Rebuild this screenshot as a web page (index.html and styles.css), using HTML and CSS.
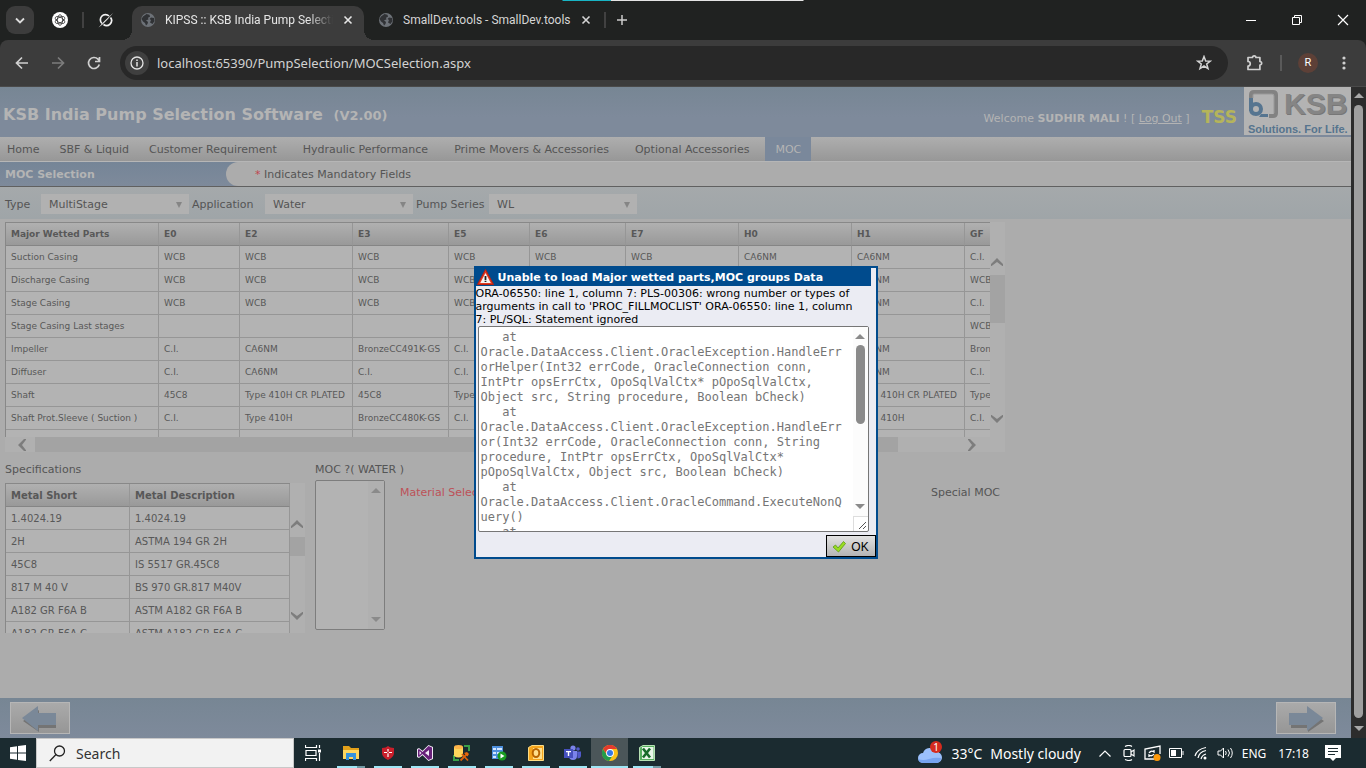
FILE: index.html
```html
<!DOCTYPE html>
<html lang="en">
<head>
<meta charset="utf-8">
<title>KIPSS :: KSB India Pump Selection</title>
<link rel="stylesheet" href="styles.css">
</head>
<body>
<svg class="defs" aria-hidden="true">
  <symbol id="globe" viewBox="0 0 16 16"><circle cx="8" cy="8" r="7" fill="#6d7278"/><path d="M3 4.500 6.500 2l3 .8.5 2-2 1 .5 1.700-2.500.8 2 1.700-.5 2-1.500 1.500-1-2.500L3 9.500 1.500 7zM11 5.500l3 .5.5 3-2 3-2.500-1.500 1-2.500-1.500-1z" fill="#303235"/></symbol>
  <symbol id="close" viewBox="0 0 10 10"><path d="m1.500 1.500 7 7m0-7-7 7" stroke="currentColor" stroke-width="1.600" fill="none"/></symbol>
  <symbol id="chev-up" viewBox="0 0 12 8"><path d="M0 6 6 0l6 6v2.500L6 4 0 8.500z" fill="#7d7d7d"/></symbol>
</svg>

<header class="tabstrip">
  <div class="progress" aria-hidden="true"></div>
  <button class="tab-search" aria-label="Search tabs"><svg width="10" height="7" viewBox="0 0 10 7"><path d="m1 1.500 4 4 4-4" stroke="#dcdcdc" stroke-width="1.800" fill="none"/></svg></button>
  <button class="pinned" aria-label="ChatGPT"><svg width="16" height="16" viewBox="0 0 16 16"><circle cx="8" cy="8" r="8" fill="#fff"/><g fill="none" stroke="#333" stroke-width=".8"><ellipse cx="8" cy="8" rx="2.600" ry="5.300"/><ellipse cx="8" cy="8" rx="2.600" ry="5.300" transform="rotate(60 8 8)"/><ellipse cx="8" cy="8" rx="2.600" ry="5.300" transform="rotate(120 8 8)"/></g></svg></button>
  <span class="sep"></span>
  <button class="pinned pinned-last" aria-label="Grok"><svg width="16" height="16" viewBox="0 0 16 16"><path d="M12.500 5.500A5 5 0 0 1 5.500 12.500M4 11.500A5 5 0 0 1 11 4" fill="none" stroke="#f2f2f2" stroke-width="1.700"/><path d="M.5 15.500 6 9.500 15.500.5 9.500 7.500l-5 5z" fill="#f2f2f2"/></svg></button>
  <div class="tab active"><svg width="16" height="16"><use href="#globe"/></svg><span class="tab-title fade">KIPSS :: KSB India Pump Selectio</span><button aria-label="Close tab"><svg width="10" height="10"><use href="#close"/></svg></button></div>
  <div class="tab"><svg width="16" height="16"><use href="#globe"/></svg><span class="tab-title">SmallDev.tools - SmallDev.tools</span><button aria-label="Close tab"><svg width="10" height="10"><use href="#close"/></svg></button></div>
  <span class="sep"></span>
  <button class="newtab" aria-label="New tab"><svg width="12" height="12" viewBox="0 0 12 12"><path d="M6 1v10M1 6h10" stroke="#ccc" stroke-width="1.500"/></svg></button>
  <div class="winctl">
    <button aria-label="Minimize"><svg width="12" height="12"><path d="M1 6.500h10" stroke="#fff"/></svg></button>
    <button aria-label="Restore"><svg width="12" height="12" fill="none" stroke="#fff"><path d="M1.500 3.500h7v7h-7zM3.500 3V1.500h7v7H9"/></svg></button>
    <button aria-label="Close"><svg width="12" height="12"><path d="m1 1 10 10m0-10L1 11" stroke="#fff" stroke-width="1.200"/></svg></button>
  </div>
</header>

<div class="toolbar">
  <button class="tool" aria-label="Back"><svg width="14" height="14" viewBox="0 0 14 14" fill="none" stroke="#d0d0d0" stroke-width="1.700"><path d="M13 7H2m5-5.500L1.500 7 7 12.500"/></svg></button>
  <button class="tool" aria-label="Forward"><svg width="14" height="14" viewBox="0 0 14 14" fill="none" stroke="#7c7c7c" stroke-width="1.700"><path d="M1 7h11M7 1.500 12.500 7 7 12.500"/></svg></button>
  <button class="tool" aria-label="Reload"><svg width="14" height="14" viewBox="0 0 14 14" fill="none" stroke="#d0d0d0" stroke-width="1.700"><path d="M12.300 8.500A5.500 5.500 0 1 1 11 3.200L12.500 5M12.500 1v4.500H8"/></svg></button>
  <div class="omnibox">
    <button class="info" aria-label="Site information"><svg width="14" height="14" viewBox="0 0 14 14"><circle cx="7" cy="7" r="6" fill="none" stroke="#e4e4e4" stroke-width="1.300"/><path d="M7 6v4.500M7 3.500V5" stroke="#e4e4e4" stroke-width="1.500"/></svg></button>
    <input type="text" aria-label="Address" value="localhost:65390/PumpSelection/MOCSelection.aspx">
    <button class="tool" aria-label="Bookmark"><svg width="16" height="16" viewBox="0 0 16 16"><path d="m8 1.500 1.700 4.400 4.700.2-3.700 2.900 1.300 4.600L8 11l-4 2.600L5.300 9 1.600 6.100l4.700-.2z" fill="none" stroke="#d4d4d4" stroke-width="1.500"/></svg></button>
  </div>
  <button class="tool" aria-label="Extensions"><svg width="18" height="18" viewBox="0 0 18 18"><path d="M2 3.500h4.500a1.700 1.700 0 0 1 3.400 0h4V7.500a1.700 1.700 0 0 1 0 3.500v4.500H2V12a2 2 0 0 0 0-4.500z" fill="none" stroke="#d0d0d0" stroke-width="1.700" stroke-linejoin="round"/></svg></button>
  <span class="sep tall"></span>
  <button class="tool" aria-label="Profile"><span class="avatar">R</span></button>
  <button class="tool" aria-label="Menu"><svg width="4" height="16" fill="#d0d0d0"><circle cx="2" cy="3" r="1.600"/><circle cx="2" cy="8" r="1.600"/><circle cx="2" cy="13" r="1.600"/></svg></button>
</div>

<div class="viewport">
  <main class="page">
    <div class="banner">
      <h1>KSB India Pump Selection Software <small>(V2.00)</small></h1>
      <p class="welcome">Welcome <b>SUDHIR MALI</b> ! [ <a href="#">Log Out</a> ]</p>
      <b class="tss">TSS</b>
      <div class="logo">
        <div class="logo-top">
          <svg width="32" height="30" viewBox="0 0 32 30"><path d="M3 12V6q0-3 3-3h19q3 0 3 3v18q0 3-3 3h-4" fill="none" stroke="#828282" stroke-width="4"/><path d="M5 9V6q0-1 1-1h18q2 0 2 2v17" fill="none" stroke="#999" stroke-width="1"/><path d="M3 9v13M3 20a5 5 0 1 1 5 5q-5 0-5-5" fill="none" stroke="#567590" stroke-width="4"/><path d="M13 25h7v3h-9z" fill="#567590"/></svg>
          <span>KSB</span>
        </div>
        <div class="slogan">Solutions. For Life.</div>
      </div>
    </div>

    <nav class="menu">
      <a href="#">Home</a><a href="#">SBF &amp; Liquid</a><a href="#">Customer Requirement</a><a href="#" class="apart">Hydraulic Performance</a><a href="#" class="apart">Prime Movers &amp; Accessories</a><a href="#" class="apart">Optional Accessories</a><a href="#" class="apart current">MOC</a>
    </nav>

    <div class="titlebar">
      <h2>MOC Selection</h2>
      <p><span class="req">*</span> Indicates Mandatory Fields</p>
    </div>

    <form class="filters">
      <label for="type">Type</label><span class="pick"><select id="type"><option>MultiStage</option></select></span>
      <label for="app">Application</label><span class="pick"><select id="app"><option>Water</option></select></span>
      <label for="series">Pump Series</label><span class="pick"><select id="series"><option>WL</option></select></span>
    </form>

    <section class="parts">
      <div class="parts-main">
        <div class="clip parts-clip">
          <table class="grid parts-table">
            <colgroup><col class="w-name"><col class="w-s"><col class="w-l"><col class="w-m"><col class="w-s"><col class="w-m"><col class="w-l"><col class="w-l"><col class="w-l"><col class="w-m"></colgroup>
            <thead><tr><th>Major Wetted Parts</th><th>E0</th><th>E2</th><th>E3</th><th>E5</th><th>E6</th><th>E7</th><th>H0</th><th>H1</th><th>GF</th></tr></thead>
            <tbody>
              <tr><td>Suction Casing</td><td>WCB</td><td>WCB</td><td>WCB</td><td>WCB</td><td>WCB</td><td>WCB</td><td>CA6NM</td><td>CA6NM</td><td>C.I.</td></tr>
              <tr><td>Discharge Casing</td><td>WCB</td><td>WCB</td><td>WCB</td><td>WCB</td><td>WCB</td><td>WCB</td><td>CA6NM</td><td>CA6NM</td><td>WCB</td></tr>
              <tr><td>Stage Casing</td><td>WCB</td><td>WCB</td><td>WCB</td><td>WCB</td><td>WCB</td><td>WCB</td><td>CA6NM</td><td>CA6NM</td><td>C.I.</td></tr>
              <tr><td>Stage Casing Last stages</td><td></td><td></td><td></td><td></td><td></td><td></td><td></td><td></td><td>WCB</td></tr>
              <tr><td>Impeller</td><td>C.I.</td><td>CA6NM</td><td>BronzeCC491K-GS</td><td>C.I.</td><td>CA6NM</td><td>C.I.</td><td>CA6NM</td><td>CA6NM</td><td>BronzeCC491K-GS</td></tr>
              <tr><td>Diffuser</td><td>C.I.</td><td>CA6NM</td><td>C.I.</td><td>C.I.</td><td>CA6NM</td><td>C.I.</td><td>CA6NM</td><td>CA6NM</td><td>C.I.</td></tr>
              <tr><td>Shaft</td><td>45C8</td><td>Type 410H CR PLATED</td><td>45C8</td><td>Type 410H</td><td>45C8</td><td>45C8</td><td>Type 410H</td><td>Type 410H CR PLATED</td><td>Type 410H</td></tr>
              <tr><td>Shaft Prot.Sleeve ( Suction )</td><td>C.I.</td><td>Type 410H</td><td>BronzeCC480K-GS</td><td>C.I.</td><td>C.I.</td><td>C.I.</td><td>Type 410H</td><td>Type 410H</td><td>C.I.</td></tr>
              <tr><td></td><td></td><td></td><td></td><td></td><td></td><td></td><td></td><td></td><td></td></tr>
            </tbody>
          </table>
        </div>
        <div class="hbar"><svg class="left" width="12" height="8"><use href="#chev-up"/></svg><i></i><svg class="right" width="12" height="8"><use href="#chev-up"/></svg></div>
      </div>
      <div class="vbar"><svg width="12" height="8"><use href="#chev-up"/></svg><i></i><svg class="down" width="12" height="8"><use href="#chev-up"/></svg></div>
    </section>

    <section class="lower">
      <div class="specs">
        <h3>Specifications</h3>
        <div class="spec-box">
          <div class="clip spec-clip">
            <table class="grid spec-table">
              <colgroup><col class="w-short"><col></colgroup>
              <thead><tr><th>Metal Short</th><th>Metal Description</th></tr></thead>
              <tbody>
                <tr><td>1.4024.19</td><td>1.4024.19</td></tr>
                <tr><td>2H</td><td>ASTMA 194 GR 2H</td></tr>
                <tr><td>45C8</td><td>IS 5517 GR.45C8</td></tr>
                <tr><td>817 M 40 V</td><td>BS 970 GR.817 M40V</td></tr>
                <tr><td>A182 GR F6A B</td><td>ASTM A182 GR F6A B</td></tr>
                <tr><td>A182 GR F6A C</td><td>ASTM A182 GR F6A C</td></tr>
              </tbody>
            </table>
          </div>
          <div class="vbar vbar-spec"><svg width="12" height="8"><use href="#chev-up"/></svg><i></i><svg class="down" width="12" height="8"><use href="#chev-up"/></svg></div>
        </div>
      </div>
      <div class="moc">
        <label for="moc">MOC ?( WATER )</label>
        <div class="listbox"><select id="moc" size="6"></select><div class="steps"><span class="tri-up"></span><span class="tri-down"></span></div></div>
      </div>
      <div class="notes"><span class="material">Material Selection</span><span>Special MOC</span></div>
    </section>

    <footer class="pager">
      <button aria-label="Previous"><svg width="38" height="28" viewBox="0 0 38 28"><path d="M2 17 18 6v5h17v13H18v4z" fill="#747474"/><path d="M1 14 17 2v7h18v12H17v6z" fill="#7a8898"/></svg></button>
      <button aria-label="Next"><svg width="38" height="28" viewBox="0 0 38 28"><path d="M37 17 21 6v5H4v13h17v4z" fill="#747474"/><path d="M36 14 20 2v7H2v12h18v6z" fill="#7a8898"/></svg></button>
    </footer>
  </main>
  <div class="page-scroll" aria-hidden="true"><span class="tri-up"></span><i></i><span class="tri-down"></span></div>

  <div class="overlay">
    <div class="dialog" role="dialog" aria-labelledby="dlg-title">
      <h2 id="dlg-title"><svg width="17" height="16" viewBox="0 0 17 16"><path d="M8.500.5 16.500 15.500H.5z" fill="#e23a22" stroke="#b62010"/><path d="M8.500 4 13.800 14h-10.600z" fill="#f5f5f5"/><path d="M8.500 7v4M8.500 11.700v1.300" stroke="#222" stroke-width="1.800"/></svg>Unable to load Major wetted parts,MOC groups Data</h2>
      <p>ORA-06550: line 1, column 7: PLS-00306: wrong number or types of arguments in call to 'PROC_FILLMOCLIST' ORA-06550: line 1, column 7: PL/SQL: Statement ignored</p>
      <div class="trace">
        <textarea aria-label="Stack trace" readonly>   at Oracle.DataAccess.Client.OracleException.HandleErrorHelper(Int32 errCode, OracleConnection conn, IntPtr opsErrCtx, OpoSqlValCtx* pOpoSqlValCtx, Object src, String procedure, Boolean bCheck)
   at Oracle.DataAccess.Client.OracleException.HandleError(Int32 errCode, OracleConnection conn, String procedure, IntPtr opsErrCtx, OpoSqlValCtx* pOpoSqlValCtx, Object src, Boolean bCheck)
   at Oracle.DataAccess.Client.OracleCommand.ExecuteNonQuery()
   at</textarea>
        <div class="trace-side" aria-hidden="true"><div class="trace-bar"><span class="tri-up"></span><i></i><span class="tri-down"></span></div><svg width="15" height="15"><path d="M0 .5h15M.5 0v15" stroke="#ddd"/><path d="m6 13 7-7m-3 7 3-3" stroke="#555"/></svg></div>
      </div>
      <div class="dialog-foot"><button><svg width="14" height="12" viewBox="0 0 14 12"><path d="m1 6 2.500-2L6 7 11.500.5 13.500 2.500 6.500 11z" fill="#9add22" stroke="#5a9a12" stroke-width=".8"/></svg>OK</button></div>
    </div>
  </div>
</div>

<footer class="taskbar">
  <button class="start" aria-label="Start"><svg width="16" height="16" fill="#fff"><path d="M0 2.200 7 1.200V7.500H0zM8 1 16 0v7.500H8zM0 8.500h7v6.300l-7-1zM8 8.500h8V16l-8-1.100z"/></svg></button>
  <label class="search"><svg width="17" height="17" viewBox="0 0 17 17" fill="none" stroke="#222" stroke-width="1.300"><circle cx="10.500" cy="6" r="5"/><path d="M7 9.500.8 16"/></svg><input type="text" placeholder="Search" aria-label="Search"></label>
  <div class="apps">
    <button class="plain" aria-label="Task view"><svg width="17" height="16" fill="none" stroke="#fff"><path d="M.5 0v2.500h11V0M.5 16v-2.500h11V16M1 5.500h10v5H1zM14.500 0v3m0 5v8" stroke-width="1.200"/><path d="M13 4.500h3v3h-3z" fill="#fff" stroke="none"/></svg></button>
    <button class="many" aria-label="File Explorer"><svg width="16" height="16"><path d="M0 1h6l2 2h8v11H0z" fill="#e3a11a"/><path d="M0 5h16v9H0z" fill="#ffd75e"/><path d="M3 15V8h10v7h-3v-3H6v3z" fill="#3593dd"/></svg></button>
    <button aria-label="Security"><svg width="12" height="14"><path d="M0 2q4 0 6-2 2 2 6 2v5q0 4-6 7-6-3-6-7z" fill="#c91f2b"/><path d="M6 3v8M2 6.500h8" stroke="#fff" stroke-width="1.200"/><circle cx="6" cy="6.500" r="1" fill="#c91f2b"/></svg></button>
    <button aria-label="Visual Studio"><svg width="16" height="16"><path d="M11.500 0 16 2v12l-4.500 2L5.500 10.300 2 13l-2-1V4l2-1 3.500 2.700z" fill="#f2eaf7"/><path d="m11.500 1 3.500 1.500v11L11.500 15 5.500 9 2 12l-1-.7V4.700L2 4l3.500 3zM12 5 8 8l4 3zM2.500 6v4l2-2z" fill="#68217a" fill-rule="evenodd"/></svg></button>
    <button aria-label="Database Tools"><svg width="17" height="17"><path d="M11 1h5v5M1 10v5h5" fill="none" stroke="#39a048" stroke-width="2"/><path d="M1 2v9q4.500 3 9 0V2z" fill="#ffd65c"/><ellipse cx="5.500" cy="2" rx="4.500" ry="2" fill="#ffb54a"/><path d="m7.500 15.500 6-6M9 9l6 6.500" stroke="#d9610c" stroke-width="1.800"/><path d="m11 8 3-1 2 2-1.500 2.500z" fill="#e8690b"/></svg></button>
    <button aria-label="Toad"><svg width="16" height="16"><path d="M1 1h11v13H1z" fill="#4d8fdd"/><path d="M2 3h3v2H2zM6 3h5v2H6zM2 7h3v2H2zM6 7h5v2H6zM2 11h3v2H2z" fill="#d4e7ff"/><circle cx="11" cy="11" r="4.500" fill="#189c20"/><path d="m9.500 8.500 4 2.500-4 2.500z" fill="#fff"/></svg></button>
    <button aria-label="Outlook"><svg width="16" height="16"><path d="M.5 2.500 4 .5h11.500v15H.5z" fill="#f6a51c" stroke="#fbdc86"/><path d="M5 3h9v11H5z" fill="#ffdf8c"/><ellipse cx="8" cy="8" rx="3.300" ry="4" fill="none" stroke="#b86400" stroke-width="2"/></svg></button>
    <button aria-label="Teams"><svg width="17" height="16"><circle cx="9" cy="3" r="2.600" fill="#7b83eb"/><circle cx="14" cy="4" r="1.800" fill="#5059c9"/><path d="M5 6h8v5a4 4 0 0 1-8 0z" fill="#7b83eb"/><path d="M13 6.500h4v4q0 3-3.500 3z" fill="#5059c9"/><path d="M0 4h9v9H0z" fill="#4650bd"/><path d="M2 6h5v1.300H5.200V11H3.800V7.300H2z" fill="#fff"/></svg></button>
    <button class="on" aria-label="Chrome"><svg width="16" height="16"><circle cx="8" cy="8" r="8" fill="#fbc116"/><path d="M1 4a8 8 0 0 1 14 0H8L5 9.500z" fill="#e33b2e"/><path d="M1 4a8 8 0 0 0 6 12l4-6H5z" fill="#229b4b"/><circle cx="8" cy="8" r="3.900" fill="#fff"/><circle cx="8" cy="8" r="3" fill="#3478e5"/></svg></button>
    <button class="many" aria-label="Excel"><svg width="16" height="16"><path d="M.5 2.500 4 .5h11.500v15H.5z" fill="#58b060" stroke="#b7e1b4"/><path d="M3 2h11.500v12H3z" fill="#e9f6e8"/><path d="m4 3.500 7 9m0-9-7 9" stroke="#176b2a" stroke-width="2.600"/></svg></button>
  </div>
  <div class="tray">
    <button class="weather"><svg width="26" height="24" viewBox="0 0 26 24"><circle cx="17" cy="11" r="5" fill="#e89b25"/><path d="M6 22a5 5 0 0 1 0-10 7 7 0 0 1 13-1 5.500 5.500 0 0 1 1 11z" fill="#9bc0fb"/><path d="M1 18q5 2 11 0t12-1a5 5 0 0 1-4 5H6q-4 0-5-4z" fill="#76a3f0"/><circle cx="19" cy="6" r="6" fill="#d52b1e"/><text x="19" y="10" text-anchor="middle" class="badge">1</text></svg><span>33°C</span><span>Mostly cloudy</span></button>
    <button aria-label="Show hidden icons"><svg width="12" height="7"><path d="m.5 6.500 5.500-5.500 5.500 5.500" fill="none" stroke="#fff" stroke-width="1.200"/></svg></button>
    <button aria-label="Meet Now"><svg width="12" height="16" fill="none" stroke="#fff" stroke-width="1.200"><rect x="1" y="4.500" width="7" height="7" rx="1"/><path d="m8 7 3-2v6L8 9M2 1.500q4-2 7 0M2 14.500q4 2 7 0"/></svg></button>
    <button aria-label="Update"><svg width="17" height="16" fill="none" stroke="#fff" stroke-width="1.300"><path d="M10 14H1V4l15-3v8M5 8q2-3 5-1V5M10 9q-2 3-5 1v2"/><circle cx="13" cy="12.500" r="3.500" fill="#ff9a0a" stroke="none"/></svg></button>
    <button aria-label="Battery"><svg width="15" height="10"><path d="M.5.500h12v9H.5zM14 3v4" fill="none" stroke="#fff"/><path d="M2 2h5v6H2z" fill="#fff"/></svg></button>
    <button aria-label="Network"><svg width="14" height="14" fill="none" stroke="#fff" stroke-width="1.200"><path d="M1 10Q3 3 12 1.500M4 12q1-6 8-7.500M7 13q1-4 5-5"/><circle cx="11" cy="12" r="1.500" fill="#fff" stroke="none"/></svg></button>
    <button aria-label="Volume"><svg width="16" height="12" fill="none" stroke="#fff"><path d="M1 4h2.500L6.500 1v10L3.500 8H1zM8.500 4q1.500 2 0 4M11 2.500q3 3.500 0 7M13.500 1q3.500 5 0 10"/></svg></button>
    <span class="lang">ENG</span><time>17:18</time>
    <button aria-label="Notifications"><svg width="16" height="16"><path d="M0 0h16v13h-5l-3 3-3-3H0z" fill="#fff"/><path d="M3 3.500h10M3 6.500h10M3 9.500h7" stroke="#1b2b30" stroke-width="1.200"/></svg></button>
  </div>
</footer>
</body>
</html>
```
FILE: styles.css
```css
* { box-sizing: border-box; }
body {
  margin: 0;
  height: 100vh;
  display: flex;
  flex-direction: column;
  overflow: hidden;
  background: #202221;
  font-family: "DejaVu Sans", Verdana, sans-serif;
  font-size: 11px;
  color: #555;
}
button, input, select, textarea { font: inherit; color: inherit; border: 0; background: none; padding: 0; margin: 0; }
button { display: flex; align-items: center; justify-content: center; }
h1, h2, h3, p { margin: 0; font-weight: normal; }
svg { display: block; flex: none; }
.defs { position: absolute; width: 0; height: 0; }

/* Browser chrome */
.tabstrip { position: relative; flex: none; height: 40px; display: flex; align-items: center; padding-left: 6px; background: #202221; font-family: Roboto, "Noto Sans", sans-serif; font-size: 12px; color: #d5d5d5; }
.progress { position: absolute; top: 0; left: 50%; width: 241px; height: 1px; transform: translateX(-50%); background: linear-gradient(90deg, #18b4c4 20%, #e4e4e4 20%); }
.tab-search { width: 28px; height: 28px; border-radius: 9px; background: #3c3c3c; margin-right: 9px; }
.pinned { width: 34px; height: 34px; }
.pinned-last { margin-right: 9px; }
.sep { width: 2px; height: 16px; margin: 0 5px; background: #414141; }
.tab { width: 232px; height: 34px; margin-top: 6px; padding: 0 8px 6px; display: flex; align-items: center; }
.tab + .tab { margin-left: 6px; }
.tab + .tab + .sep { margin: 0 4px 0 2px; }
.tab.active { position: relative; background: #3c3c3c; border-radius: 10px 10px 0 0; color: #e6e6e6; }
.tab.active::before, .tab.active::after { content: ""; position: absolute; bottom: 0; width: 10px; height: 10px; }
.tab.active::before { left: -10px; background: radial-gradient(circle at 0 0, transparent 10px, #3c3c3c 10px); }
.tab.active::after { right: -10px; background: radial-gradient(circle at 100% 0, transparent 10px, #3c3c3c 10px); }
.tab-title { flex: 1; min-width: 0; margin-left: 9px; overflow: hidden; white-space: nowrap; }
.fade { -webkit-mask-image: linear-gradient(90deg, #000 85%, transparent); mask-image: linear-gradient(90deg, #000 85%, transparent); }
.tab button { width: 16px; margin-left: 7px; }
.newtab { width: 24px; height: 28px; }
.winctl { margin-left: auto; display: flex; }
.winctl button { width: 46px; height: 40px; }
.toolbar { flex: none; height: 47px; display: flex; align-items: center; padding: 0 4px; background: #3c3c3c; border-radius: 8px 8px 0 0; border-bottom: 1px solid #4a4a4a; }
.tool { width: 36px; height: 34px; flex: none; }
.omnibox { flex: 1; height: 34px; margin: 0 9px 0 8px; padding: 0 6px 0 5px; display: flex; align-items: center; border-radius: 17px; background: #282828; }
.info { width: 24px; height: 24px; border-radius: 50%; background: #3f3f3f; flex: none; }
.omnibox input { flex: 1; margin-left: 8px; outline: 0; font-family: "Noto Sans", "Open Sans", sans-serif; font-size: 13px; color: #d2d2d2; }
.tall { margin: 0 8px 0 7px; background: #5a5a5a; }
.avatar { width: 20px; height: 20px; border-radius: 50%; background: #5d4037; color: #fff; font: 11px/20px Roboto, sans-serif; }

/* Page */
.viewport { position: relative; flex: 1; min-height: 0; display: flex; }
.page { flex: 1; min-width: 0; display: flex; flex-direction: column; background: #acacac; overflow: hidden; }
.banner { height: 50px; display: flex; align-items: flex-start; background: linear-gradient(#778694, #7e8a9b 60%); color: #b4b4b4; }
.banner h1 { flex: 1; margin: 17px 0 0 3px; font-size: 16px; line-height: 22px; font-weight: bold; }
.banner small { font-size: 13px; margin-left: 5px; }
.welcome { margin-top: 24px; line-height: 16px; }
.welcome a { color: inherit; }
.tss { margin: 19px 7px 0 12px; font-size: 17px; line-height: 22px; color: #b5b45a; }
.logo { width: 107px; height: 48px; background: #b3b3b3; padding: 1px 0 0 4px; font-family: "Liberation Sans", Arial, sans-serif; font-weight: bold; }
.logo-top { display: flex; align-items: center; gap: 4px; height: 32px; }
.logo-top span { font-size: 30px; line-height: 32px; color: #858585; text-shadow: 1px 1px 0 #777; }
.slogan { font-size: 11px; line-height: 18px; color: #56748e; white-space: nowrap; }
.menu { height: 24px; display: flex; background: linear-gradient(#aeaeae, #979797); line-height: 24px; }
.menu a { padding: 1px 10px 0; color: #555; text-decoration: none; white-space: nowrap; }
.menu a:first-child { padding-left: 7px; }
.menu .apart { margin-left: 6px; }
.menu .current { background: #7a889b; color: #b4b4b4; }
.titlebar { height: 26px; display: flex; border-top: 1px solid #b6b6b6; border-bottom: 1px solid #606060; background: linear-gradient(#758597, #7e8a9b) 0 0 / 260px 100% no-repeat; line-height: 24px; }
.titlebar h2 { width: 226px; padding: 1px 0 0 5px; font-size: 11px; line-height: 24px; font-weight: bold; color: #b4b4b4; }
.titlebar p { flex: 1; padding: 1px 0 0 29px; background: #acacac; border-radius: 12px 0 0 12px; }
.req { color: #c0454f; }
.filters { height: 32px; padding: 2px 5px 0; display: flex; align-items: center; background: linear-gradient(#a5a9ab, #9fa5a8); }
.pick { position: relative; }
.pick select { appearance: none; display: block; width: 148px; height: 20px; padding-left: 8px; background: #b1b1b1; }
.pick::after { content: ""; position: absolute; right: 7px; top: 8px; border: 3px solid transparent; border-top: 6px solid #858585; border-bottom: 0; }
.filters label { width: 76px; padding-left: 3px; white-space: nowrap; }
.filters label:first-child { width: 36px; padding-left: 0; }

.clip { overflow: hidden; flex: 1; min-width: 0; }
.grid { table-layout: fixed; border-spacing: 0; border-left: 1px solid #888; border-top: 1px solid #888; background: #b3b3b3; font-size: 9px; color: #585858; }
.grid th, .grid td { height: 23px; padding: 0 5px; border-right: 1px solid #969696; border-bottom: 1px solid #969696; text-align: left; white-space: nowrap; }
.grid th { background: linear-gradient(#b0b0b0, #999); border-bottom-color: #858585; }
.parts { width: 1000px; margin: 3px 0 0 5px; display: flex; }
.parts-main { flex: 1; min-width: 0; }
.parts-clip { height: 215px; }
.parts-table { width: 1056px; }
.w-name { width: 153px; }
.w-s { width: 81px; }
.w-m { width: 96px; }
.w-l { width: 113px; }
.w-short { width: 124px; }
.hbar { height: 15px; display: flex; align-items: center; background: #b0b0b0; padding: 0 12px 0 11px; }
.hbar i { flex: none; width: 863px; height: 15px; margin-left: 7px; background: #a3a3a3; }
.left { transform: rotate(-90deg); }
.right { transform: rotate(90deg); margin-left: auto; }
.down { transform: rotate(180deg); margin-top: auto; }
.vbar { width: 15px; padding: 36px 0 29px 1px; display: flex; flex-direction: column; background: #b0b0b0; }
.vbar i { height: 48px; margin: 9px 0 0 -1px; background: #a3a3a3; }
.lower { display: flex; padding: 0 5px; }
.specs { width: 300px; }
.specs h3 { margin: 8px 0 3px; font-size: 11px; line-height: 20px; }
.spec-box { display: flex; height: 150px; }
.spec-clip { height: 150px; }
.spec-table { width: 100%; font-size: 10px; }
.vbar-spec { padding: 37px 0 13px 1px; }
.vbar-spec i { height: 19px; }
.moc { margin-left: 10px; width: 70px; }
.moc label { display: block; margin: 8px 0 0; line-height: 20px; white-space: nowrap; }
.listbox { height: 150px; display: flex; border: 1px solid #7d7d7d; border-radius: 2px; background: #b3b3b3; }
.listbox select { flex: 1; min-width: 0; overflow: hidden; }
.steps { width: 16px; padding: 7px 0; display: flex; flex-direction: column; align-items: center; justify-content: space-between; background: #b0b0b0; }
.tri-up, .tri-down { border: 5px solid transparent; }
.tri-up { border-top: 0; border-bottom-color: #8a8a8a; }
.tri-down { border-bottom: 0; border-top-color: #8a8a8a; }
.notes { width: 600px; margin: 31px 0 0 15px; display: flex; justify-content: space-between; line-height: 20px; }
.material { color: #bd5158; }
.pager { margin-top: auto; height: 40px; padding: 0 15px 0 10px; display: flex; align-items: center; justify-content: space-between; background: linear-gradient(#778694, #7e8a9b); }
.pager button { width: 60px; height: 32px; border: 1px solid #b6b6b6; background: linear-gradient(#aaa, #969696); }
.page-scroll { width: 15px; padding: 6px 0 7px; display: flex; flex-direction: column; align-items: center; background: #2c2c2c; }
.page-scroll i { flex: 1; width: 9px; margin: 7px 0 8px; border-radius: 5px; background: #9f9f9f; }
.page-scroll .tri-up { border-bottom-color: #a8a8a8; }
.page-scroll .tri-down { border-top-color: #a8a8a8; }

/* Error dialog */
.overlay { position: absolute; inset: 0 15px 0 0; display: flex; align-items: center; justify-content: center; }
.dialog { width: 404px; border: 2px solid #004b8d; background: #ebecf3; color: #000; }
.dialog h2 { margin-right: 5px; height: 18px; display: flex; align-items: center; gap: 4px; padding-left: 1px; background: #004b8d; color: #fff; font-size: 11px; font-weight: bold; white-space: nowrap; }
.dialog p { padding: 1px 12px 0 0; line-height: 13px; }
.trace { margin: 0 7px 0 2px; height: 206px; display: flex; border: 1px solid #767676; border-radius: 2px; background: #fff; }
.trace textarea { flex: 1; min-width: 0; padding: 3px 8px 0 2px; resize: none; overflow: hidden; outline: 0; font-family: "DejaVu Sans Mono", Consolas, monospace; font-size: 12px; line-height: 15px; color: #757575; }
.trace-side { width: 15px; display: flex; flex-direction: column; }
.trace-bar { flex: 1; padding: 7px 0; display: flex; flex-direction: column; align-items: center; background: #fcfcfc; }
.trace-bar i { width: 9px; height: 79px; margin: 6px 0 auto; border-radius: 5px; background: #8a8a8a; }
.dialog-foot { display: flex; justify-content: flex-end; padding-top: 3px; }
.dialog-foot button { width: 50px; height: 22px; padding-top: 2px; gap: 5px; border: 1px solid #000; background: linear-gradient(#e2e2e2, #b4b4b4); font-family: "Liberation Sans", Arial, sans-serif; font-size: 12px; }

/* Taskbar */
.taskbar { flex: none; height: 30px; display: flex; background: #1b2b30; color: #fff; font-family: "Noto Sans", "Open Sans", sans-serif; font-size: 12px; }
.start { width: 36px; }
.search { width: 258px; display: flex; align-items: center; gap: 10px; padding-left: 12px; background: #f2f2f2; border: 1px solid #c8c8c8; }
.search input { flex: 1; min-width: 0; font-size: 14px; color: #333; }
.search input::placeholder { color: #333; opacity: 1; }
.apps { display: flex; padding-left: 1px; }
.apps button { position: relative; width: 37px; }
.apps button::after { content: ""; position: absolute; left: 5px; right: 4px; bottom: 0; height: 2px; background: #9fe6f5; }
.apps .many::after { background: linear-gradient(90deg, #9fe6f5 70%, #729aa4 70%); }
.apps .plain::after { display: none; }
.apps .on { background: #4b5659; }
.apps .on::after { left: 0; right: 0; }
.tray { margin-left: auto; display: flex; align-items: center; padding-right: 21px; }
.tray button { width: 24px; }
.tray .weather { width: auto; gap: 8px; margin-right: 12px; font-size: 14px; white-space: nowrap; }
.badge { fill: #fff; font-size: 10px; }
.lang { margin: 0 12px 0 5px; }
.tray time { margin-right: 12px; }
```
